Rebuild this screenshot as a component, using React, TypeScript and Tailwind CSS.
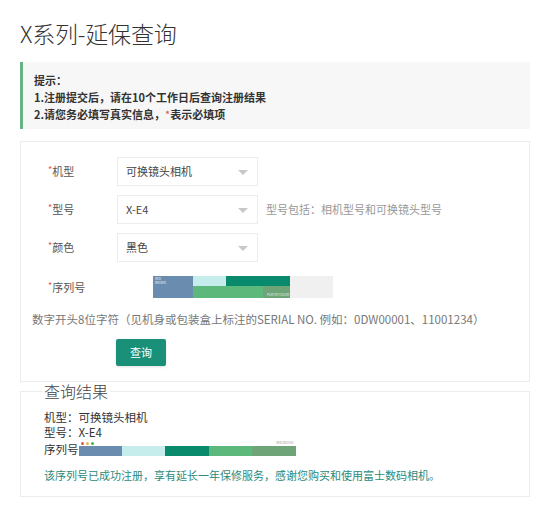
import { ReactNode } from 'react';

const font = { fontFamily: '"Noto Sans CJK SC", "Open Sans", sans-serif' };

function Caret() {
  return <span className="absolute right-[9px] top-[12px] w-0 h-0 border-l-[5px] border-r-[5px] border-t-[5px] border-l-transparent border-r-transparent border-t-[#c8c8c8]" />;
}

function Row({ label, children }: { label: string; children: ReactNode }) {
  return (
    <div className="flex items-center">
      <div className="w-[96px] pl-[27px] text-[11px] text-[#555]">
        <span className="text-[#e0554a] text-[9px] align-top">*</span>
        {label}
      </div>
      {children}
    </div>
  );
}

function Select({ value }: { value: string }) {
  return (
    <div className="relative w-[141px] h-[29px] border border-[#ececec] bg-white pl-[8px] text-[11px] leading-[27px] text-[#444]">
      {value}
      <Caret />
    </div>
  );
}

export default function App() {
  return (
    <div className="w-[540px] h-[507px] bg-white pl-[20px] pr-[10px] pt-[18px] overflow-hidden" style={font}>
      <h1 className="text-[23px] leading-[30px] font-light text-[#333] tracking-[-0.2px]">X系列-延保查询</h1>

      {/* 提示 */}
      <div className="mt-[14px] h-[67px] bg-[#f7f7f7] border-l-[3px] border-[#66b383] pl-[11px] pt-[10px] text-[11px] leading-[17px] font-bold text-[#333]">
        <p>提示：</p>
        <p>1.注册提交后，请在10个工作日后查询注册结果</p>
        <p>2.请您务必填写真实信息，<span className="text-[#e0554a] font-normal">*</span>表示必填项</p>
      </div>

      {/* 表单 */}
      <div className="mt-[12px] h-[241px] border border-[#ececec] pt-[15px]">
        <div className="flex flex-col gap-[9px]">
          <Row label="机型">
            <Select value="可换镜头相机" />
          </Row>
          <Row label="型号">
            <Select value="X-E4" />
            <span className="ml-[8px] text-[11px] text-[#999]">型号包括：相机型号和可换镜头型号</span>
          </Row>
          <Row label="颜色">
            <Select value="黑色" />
          </Row>
        </div>
        <div className="mt-[14px] flex items-center">
          <div className="w-[96px] pl-[27px] text-[11px] text-[#555]">
            <span className="text-[#e0554a] text-[9px] align-top">*</span>
            序列号
          </div>
          <div className="ml-[36px] flex w-[180px] h-[22px] bg-[#f0f0f0]">
            <div className="flex w-[137px] h-full">
              <div className="w-[40px] h-full bg-[#6a8caf] pl-[2px] pt-[1px] text-[3px] leading-[4px] text-white/80">
                RED<br />BROWN
              </div>
              <div className="flex-1 flex flex-col">
                <div className="flex h-[10px]">
                  <div className="w-[33px] bg-[#c7ecec]" />
                  <div className="flex-1 bg-[#0a8a6c]" />
                </div>
                <div className="flex flex-1">
                  <div className="w-[70px] bg-[#5db97b]" />
                  <div className="flex-1 bg-[#6fa478] flex items-end justify-end pr-[1px] whitespace-nowrap overflow-hidden text-[3px] leading-[5px] text-white/80">PLAY MY COLOR</div>
                </div>
              </div>
            </div>
          </div>
        </div>
        <p className="mt-[13px] pl-[11px] text-[11.5px] leading-[16px] text-[#777]">
          数字开头8位字符（见机身或包装盒上标注的SERIAL NO. 例如：0DW00001、11001234）
        </p>
        <div className="mt-[11px] pl-[95px]">
          <button className="w-[50px] h-[27px] rounded-[2px] bg-[#1b9079] text-white text-[11px] shadow-sm">查询</button>
        </div>
      </div>

      {/* 查询结果 */}
      <fieldset className="-mt-[1px] h-[116px] border border-[#ececec] pl-[23px] pr-[10px]">
        <legend className="px-[2px] -ml-[2px] text-[16px] leading-[20px] font-light text-[#444]">查询结果</legend>
        <div className="mt-[9px] text-[11.5px] leading-[15px] text-[#333]">
          <p>机型：可换镜头相机</p>
          <p>型号：X-E4</p>
          <div className="flex items-end">
            <span>序列号</span>
            <div className="flex flex-col w-[217px] mb-[1px]">
              <div className="flex items-center justify-between h-[6px] px-[2px]">
                <div className="flex gap-[2px]">
                  <span className="w-[3px] h-[3px] rounded-full bg-[#e0554a]" />
                  <span className="w-[3px] h-[3px] rounded-full bg-[#f0b840]" />
                  <span className="w-[3px] h-[3px] rounded-full bg-[#40b060]" />
                </div>
                <span className="text-[3px] leading-[4px] text-[#999] whitespace-nowrap">RED DESIGN</span>
              </div>
              <div className="flex h-[10px]">
                <div className="flex-1 bg-[#6a8caf]" />
                <div className="flex-1 bg-[#c7ecec]" />
                <div className="flex-1 bg-[#0a8a6c]" />
                <div className="flex-1 bg-[#5db97b]" />
                <div className="flex-1 bg-[#6fa478]" />
              </div>
            </div>
          </div>
        </div>
        <p className="mt-[10px] text-[11px] leading-[16px] text-[#2a8a7c]">
          该序列号已成功注册，享有延长一年保修服务，感谢您购买和使用富士数码相机。
        </p>
      </fieldset>
    </div>
  );
}
